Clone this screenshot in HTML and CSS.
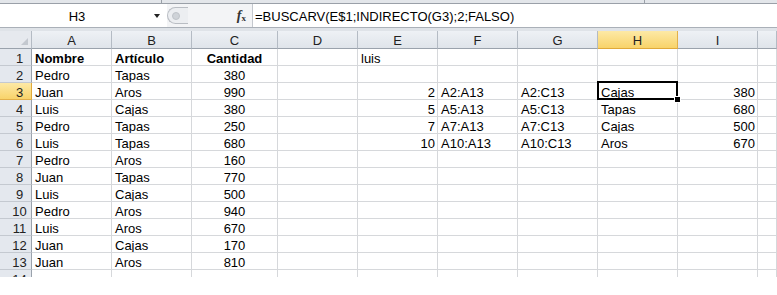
FILE: index.html
```html
<!DOCTYPE html>
<html lang="es">
<head>
  <meta charset="UTF-8">
  <title>BUSCARV</title>
  <link rel="stylesheet" href="styles.css">
</head>
<body>
  <div class="top-strip">
    <div class="strip-seg seg-1"></div>
    <div class="strip-seg seg-2"></div>
    <div class="strip-seg seg-3"></div>
  </div>

  <div class="formula-bar">
    <div class="name-box">
      <span class="name-text">H3</span>
      <span class="name-arrow"></span>
    </div>
    <div class="grip"><span class="grip-dot"></span></div>
    <div class="fx-box"><span class="fx"><i>f</i><sub>x</sub></span></div>
    <div class="formula">=BUSCARV(E$1;INDIRECTO(G3);2;FALSO)</div>
  </div>
  <div class="bar-gap"></div>

  <div class="sheet">
    <div class="row head">
      <div class="corner"><span class="corner-tri"></span></div>
      <div class="ch">A</div><div class="ch">B</div><div class="ch">C</div><div class="ch">D</div>
      <div class="ch">E</div><div class="ch">F</div><div class="ch">G</div><div class="ch ch-sel">H</div>
      <div class="ch">I</div><div class="ch"></div>
    </div>

    <div class="row">
      <div class="rh">1</div>
      <div class="c b">Nombre</div><div class="c b">Artículo</div><div class="c b ctr">Cantidad</div><div class="c"></div>
      <div class="c">luis</div><div class="c"></div><div class="c"></div><div class="c"></div><div class="c"></div><div class="c"></div>
    </div>
    <div class="row">
      <div class="rh">2</div>
      <div class="c">Pedro</div><div class="c">Tapas</div><div class="c ctr">380</div><div class="c"></div>
      <div class="c"></div><div class="c"></div><div class="c"></div><div class="c"></div><div class="c"></div><div class="c"></div>
    </div>
    <div class="row">
      <div class="rh rh-sel">3</div>
      <div class="c">Juan</div><div class="c">Aros</div><div class="c ctr">990</div><div class="c"></div>
      <div class="c num">2</div><div class="c">A2:A13</div><div class="c">A2:C13</div><div class="c active">Cajas</div><div class="c num">380</div><div class="c"></div>
    </div>
    <div class="row">
      <div class="rh">4</div>
      <div class="c">Luis</div><div class="c">Cajas</div><div class="c ctr">380</div><div class="c"></div>
      <div class="c num">5</div><div class="c">A5:A13</div><div class="c">A5:C13</div><div class="c">Tapas</div><div class="c num">680</div><div class="c"></div>
    </div>
    <div class="row">
      <div class="rh">5</div>
      <div class="c">Pedro</div><div class="c">Tapas</div><div class="c ctr">250</div><div class="c"></div>
      <div class="c num">7</div><div class="c">A7:A13</div><div class="c">A7:C13</div><div class="c">Cajas</div><div class="c num">500</div><div class="c"></div>
    </div>
    <div class="row">
      <div class="rh">6</div>
      <div class="c">Luis</div><div class="c">Tapas</div><div class="c ctr">680</div><div class="c"></div>
      <div class="c num">10</div><div class="c">A10:A13</div><div class="c">A10:C13</div><div class="c">Aros</div><div class="c num">670</div><div class="c"></div>
    </div>
    <div class="row">
      <div class="rh">7</div>
      <div class="c">Pedro</div><div class="c">Aros</div><div class="c ctr">160</div><div class="c"></div>
      <div class="c"></div><div class="c"></div><div class="c"></div><div class="c"></div><div class="c"></div><div class="c"></div>
    </div>
    <div class="row">
      <div class="rh">8</div>
      <div class="c">Juan</div><div class="c">Tapas</div><div class="c ctr">770</div><div class="c"></div>
      <div class="c"></div><div class="c"></div><div class="c"></div><div class="c"></div><div class="c"></div><div class="c"></div>
    </div>
    <div class="row">
      <div class="rh">9</div>
      <div class="c">Luis</div><div class="c">Cajas</div><div class="c ctr">500</div><div class="c"></div>
      <div class="c"></div><div class="c"></div><div class="c"></div><div class="c"></div><div class="c"></div><div class="c"></div>
    </div>
    <div class="row">
      <div class="rh">10</div>
      <div class="c">Pedro</div><div class="c">Aros</div><div class="c ctr">940</div><div class="c"></div>
      <div class="c"></div><div class="c"></div><div class="c"></div><div class="c"></div><div class="c"></div><div class="c"></div>
    </div>
    <div class="row">
      <div class="rh">11</div>
      <div class="c">Luis</div><div class="c">Aros</div><div class="c ctr">670</div><div class="c"></div>
      <div class="c"></div><div class="c"></div><div class="c"></div><div class="c"></div><div class="c"></div><div class="c"></div>
    </div>
    <div class="row">
      <div class="rh">12</div>
      <div class="c">Juan</div><div class="c">Cajas</div><div class="c ctr">170</div><div class="c"></div>
      <div class="c"></div><div class="c"></div><div class="c"></div><div class="c"></div><div class="c"></div><div class="c"></div>
    </div>
    <div class="row">
      <div class="rh">13</div>
      <div class="c">Juan</div><div class="c">Aros</div><div class="c ctr">810</div><div class="c"></div>
      <div class="c"></div><div class="c"></div><div class="c"></div><div class="c"></div><div class="c"></div><div class="c"></div>
    </div>
    <div class="row">
      <div class="rh">14</div>
      <div class="c"></div><div class="c"></div><div class="c"></div><div class="c"></div>
      <div class="c"></div><div class="c"></div><div class="c"></div><div class="c"></div><div class="c"></div><div class="c"></div>
    </div>
  </div>
</body>
</html>
```

FILE: styles.css
```css
body {
  margin: 0;
  background: #fff;
  font-family: "Liberation Sans", Arial, sans-serif;
  font-size: 13px;
  color: #000;
}

/* strip left over from the ribbon */
.top-strip {
  display: flex;
  height: 3px;
  background: #e3e6ea;
  border-bottom: 1px solid #9aa0a8;
}

.strip-seg {
  height: 100%;
}

.seg-1 {
  width: 161px;
  border-right: 1px solid #9aa0a8;
}

.seg-2 {
  width: 482px;
  border-right: 1px solid #9aa0a8;
}

/* name box + formula */
.formula-bar {
  display: flex;
  height: 23px;
  border-bottom: 1px solid #aab0b8;
  background: #f3f4f6;
}

.name-box {
  display: flex;
  align-items: center;
  width: 167px;
  background: #fff;
}

.name-text {
  width: 154px;
  text-align: center;
  padding-top: 1px;
}

.name-arrow {
  width: 0;
  height: 0;
  border-left: 3.5px solid transparent;
  border-right: 3.5px solid transparent;
  border-top: 4px solid #222;
  margin-top: 1px;
}

.grip {
  display: flex;
  align-items: center;
  width: 20px;
  margin: 3px 0;
  border: 1px solid #b9bdc3;
  border-right: none;
  border-radius: 10px 0 0 10px;
  background: #eceef1;
}

.grip-dot {
  width: 6px;
  height: 6px;
  margin-left: 4px;
  border-radius: 50%;
  background: #cfd3d8;
  border: 1px solid #bfc3c9;
}

.fx-box {
  display: flex;
  align-items: center;
  justify-content: flex-end;
  width: 65px;
  padding-right: 6px;
  box-sizing: border-box;
  border-right: 1px solid #c4c8ce;
}

.fx {
  font-family: "Liberation Serif", "Times New Roman", serif;
  font-size: 14px;
  font-weight: bold;
  color: #333;
}

.fx sub {
  font-size: 9px;
  vertical-align: -1px;
}

.formula {
  flex: 1;
  background: #fff;
  padding: 5px 0 0 2px;
  line-height: 15px;
  white-space: nowrap;
}

.bar-gap {
  height: 3px;
  background: #dfe3e8;
}

/* grid */
.sheet {
  height: 246px;
  overflow: hidden;
}

.row {
  display: grid;
  grid-template-columns: 32px 80px 80px 86px repeat(6, 80px) 1fr;
}

.c,
.rh,
.ch,
.corner {
  box-sizing: border-box;
  height: 17px;
  white-space: nowrap;
  overflow: hidden;
}

.c {
  padding: 2px 3px 0;
  line-height: 15px;
  border-right: 1px solid #d6d8db;
  border-bottom: 1px solid #d6d8db;
}

.b {
  font-weight: bold;
}

.ctr {
  text-align: center;
}

.num {
  text-align: right;
  padding-right: 2px;
}

.active {
  position: relative;
  overflow: visible;
}

.active::after {
  content: "";
  position: absolute;
  top: -2px;
  left: -1px;
  right: -1px;
  bottom: -1px;
  border: 2px solid #000;
}

.active::before {
  content: "";
  position: absolute;
  right: -4px;
  bottom: -4px;
  width: 5px;
  height: 5px;
  background: #000;
  border: 1px solid #fff;
  z-index: 1;
}

/* headers */
.head .ch,
.head .corner {
  height: 18px;
}

.ch {
  text-align: center;
  padding-top: 2px;
  line-height: 15px;
  color: #222;
  background: linear-gradient(#eef1f5, #dfe4ea);
  border-right: 1px solid #b4bbc4;
  border-bottom: 1px solid #9aa2ac;
}

.ch-sel {
  background: linear-gradient(#fde9a6, #f8d36a);
  border-right-color: #e2b04a;
  border-bottom-color: #e0a93a;
}

.corner {
  display: flex;
  align-items: flex-end;
  justify-content: flex-end;
  padding: 0 3px 3px 0;
  background: #e6e9ee;
  border-right: 1px solid #b4bbc4;
  border-bottom: 1px solid #9aa2ac;
}

.corner-tri {
  width: 0;
  height: 0;
  border-left: 7px solid transparent;
  border-bottom: 7px solid #c3c8cf;
}

.rh {
  text-align: center;
  padding: 2px 0 0 8px;
  line-height: 15px;
  color: #222;
  background: #e4e8ee;
  border-right: 1px solid #9aa2ac;
  border-bottom: 1px solid #c4c9d0;
}

.rh-sel {
  background: linear-gradient(#fde9a6, #f8d36a);
  border-bottom-color: #e2b04a;
  border-right-color: #e0a93a;
}
```
